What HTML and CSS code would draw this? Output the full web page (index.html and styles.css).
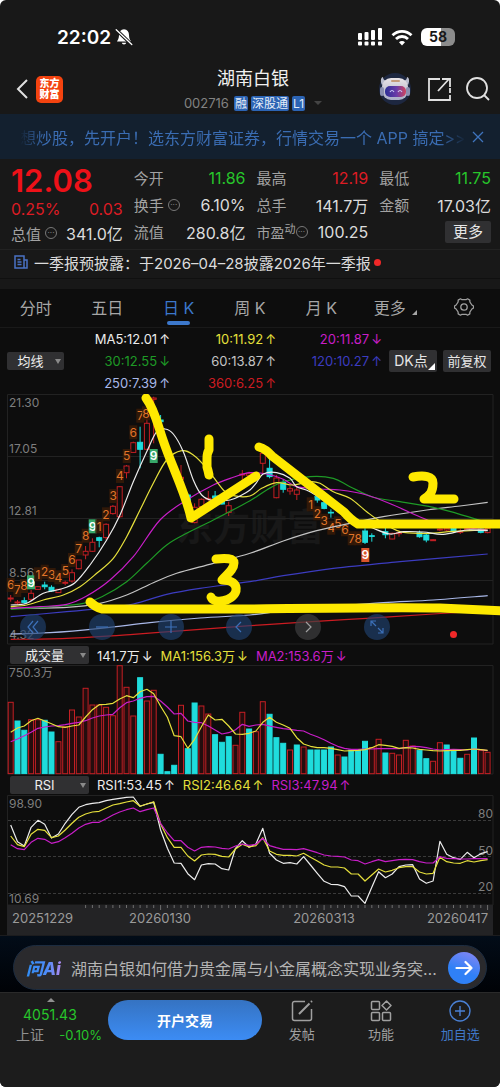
FILE: index.html
```html
<!DOCTYPE html>
<html lang="zh-CN">
<head>
    <meta charset="UTF-8">
    <meta name="viewport" content="width=device-width, initial-scale=1.0">
    <title>湖南白银 002716</title>
    <link rel="stylesheet" href="styles.css">
</head>
<body>
    <div class="app">
        <div class="status-bar">
            <div class="status-left">
                <span class="clock">22:02</span>
                <svg class="bell" viewBox="0 0 18 18" width="18" height="18">
                    <path d="M9 1.2c-3.2.4-5 2.6-5 5.8 0 3.5-1.2 4.700-2 6.500h14c-.8-1.800-2-3-2-6.500 0-3.200-1.800-5.400-5-5.800zM6.700 14.800a2.400 2.400 0 0 0 4.600 0z" fill="#fff"/>
                    <path d="M1.500 2l15 14.500" stroke="#181818" stroke-width="3.200"/>
                    <path d="M1.200 1.800l15.600 14.700" stroke="#fff" stroke-width="1.300" stroke-linecap="round"/>
                </svg>
            </div>
            <div class="status-right">
                <svg viewBox="0 0 26 18" width="26" height="18" fill="#fff">
                    <rect x="1" y="5" width="4" height="7" rx="1"/><rect x="7.500" y="4" width="4" height="8" rx="1"/>
                    <rect x="14" y="2" width="4" height="10" rx="1"/><rect x="21" y="0" width="4" height="12" rx="1"/>
                    <rect x="1" y="13.500" width="4" height="4" rx="1"/><rect x="7.500" y="13.500" width="4" height="4" rx="1"/>
                    <rect x="14" y="13.500" width="4" height="4" rx="1"/><rect x="21" y="13.500" width="4" height="4" rx="1"/>
                </svg>
                <svg viewBox="0 0 22 17" width="22" height="17" fill="none" stroke="#fff" stroke-width="2.800">
                    <path d="M1.500 6.200a13.500 13.500 0 0 1 19 0"/>
                    <path d="M5 10a8.500 8.500 0 0 1 12 0"/>
                    <path d="M11 16.500l-3-3.200a4.200 4.200 0 0 1 6 0z" fill="#fff" stroke="none"/>
                </svg>
                <span class="battery">58</span>
            </div>
        </div>

        <header class="header">
            <div class="header-left">
                <button class="icon-btn" aria-label="返回">
                    <svg viewBox="0 0 12 20" width="12" height="20" fill="none" stroke="#e0e0e0" stroke-width="2"><path d="M11 1L2 10l9 9"/></svg>
                </button>
                <a class="logo" href="#">东方<br>财富</a>
            </div>
            <div class="header-title">
                <h1>湖南白银</h1>
                <div class="stock-code">
                    <span class="code">002716</span>
                    <span class="tag">融</span><span class="tag">深股通</span><span class="tag">L1</span>
                    <i class="caret"></i>
                </div>
            </div>
            <div class="header-right">
                <button class="icon-btn" aria-label="智能助手">
                    <svg viewBox="0 0 34 34" width="34" height="34">
                        <defs>
                            <linearGradient id="visor"><stop offset="0" stop-color="#2c2f95"/><stop offset=".55" stop-color="#6a3ba8"/><stop offset="1" stop-color="#d0455e"/></linearGradient>
                            <linearGradient id="shell" x2="0" y2="1"><stop offset="0" stop-color="#e9e4e6"/><stop offset="1" stop-color="#a9adc6"/></linearGradient>
                        </defs>
                        <circle cx="17" cy="17" r="16" fill="#1d2740"/>
                        <path d="M4 13c-2-4-1-8 1-8 0 2 1 3 3 4zM30 13c2-4 1-8-1-8 0 2-1 3-3 4z" fill="#b9bccd"/>
                        <rect x="4" y="6" width="26" height="22" rx="9" fill="url(#shell)"/>
                        <rect x="2" y="15" width="4" height="9" rx="2" fill="#8a8fb0"/><rect x="28" y="15" width="4" height="9" rx="2" fill="#8a8fb0"/>
                        <path d="M14 9h7" stroke="#c49a7a" stroke-width="2" stroke-linecap="round"/>
                        <rect x="7" y="14" width="21" height="11" rx="5" fill="url(#visor)"/>
                        <path d="M12 20q2-3 4 0M20 20q2-3 4 0" fill="none" stroke="#c9c5f5" stroke-width="1.200"/>
                    </svg>
                </button>
                <button class="icon-btn" aria-label="分享">
                    <svg viewBox="0 0 24 24" width="24" height="24" fill="none" stroke="#e0e0e0" stroke-width="1.800"><path d="M13 2H2v21h21v-5M23 16v-5M11 14L22 2M15 2h8v8"/></svg>
                </button>
                <button class="icon-btn" aria-label="搜索">
                    <svg viewBox="0 0 24 24" width="24" height="24" fill="none" stroke="#e0e0e0" stroke-width="1.800"><circle cx="11" cy="11" r="10"/><path d="M18 18l5 5"/></svg>
                </button>
            </div>
        </header>

        <div class="banner">
            <a href="#">想炒股，先开户！选东方财富证券，行情交易一个 APP 搞定&gt;&gt;</a>
            <button class="icon-btn" aria-label="关闭">
                <svg viewBox="0 0 12 12" width="12" height="12" stroke="#3f74bd" stroke-width="1.300"><path d="M1 1l10 10M11 1L1 11"/></svg>
            </button>
        </div>

        <section class="quote">
            <div class="quote-col quote-main">
                <div class="price">12.08</div>
                <div class="cell change up"><span>0.25%</span><span>0.03</span></div>
                <div class="cell"><span class="label">总值<i class="more-dot">···</i></span><span>341.0亿</span></div>
            </div>
            <div class="quote-col">
                <div class="cell"><span class="label">今开</span><span class="down">11.86</span></div>
                <div class="cell"><span class="label">换手<i class="more-dot">···</i></span><span>6.10%</span></div>
                <div class="cell"><span class="label">流值</span><span>280.8亿</span></div>
            </div>
            <div class="quote-col">
                <div class="cell"><span class="label">最高</span><span class="up">12.19</span></div>
                <div class="cell"><span class="label">总手</span><span>141.7万</span></div>
                <div class="cell"><span class="label small">市盈<sup>动</sup><i class="more-dot">···</i></span><span>100.25</span></div>
            </div>
            <div class="quote-col">
                <div class="cell"><span class="label">最低</span><span class="down">11.75</span></div>
                <div class="cell"><span class="label">金额</span><span>17.03亿</span></div>
                <div class="cell end"><button class="grey-btn">更多</button></div>
            </div>
        </section>

        <a class="news" href="#">
            <svg viewBox="0 0 14 14" width="14" height="14" fill="none" stroke="#4a72c4" stroke-width="1.500"><path d="M10 13H1V1h9zM10 5h3v8h-4M3.500 4.500h3M3.500 7h4M3.500 9.500h4"/></svg>
            <span>一季报预披露：于2026–04–28披露2026年一季报</span>
            <i class="red-dot"></i>
        </a>

        <nav class="tabs">
            <button>分时</button>
            <button>五日</button>
            <button class="active">日 K</button>
            <button>周 K</button>
            <button>月 K</button>
            <button class="corner">更多</button>
            <button aria-label="设置">
                <svg viewBox="0 0 20 20" width="20" height="20" fill="none" stroke="#a0a0a0" stroke-width="1.300"><path d="M6.500 1.800l1.500.9h4l1.500-.9 2.300 1.300.1 1.900 2 3 1.600 1v2l-1.600 1-2 3-.1 1.900-2.300 1.300-1.500-.9H8l-1.500.9-2.300-1.300-.1-1.900-2-3-1.600-1V9l1.600-1 2-3 .1-1.900z" stroke-linejoin="round"/><circle cx="10" cy="10" r="3.200"/></svg>
            </button>
        </nav>

        <main class="charts">
            <div class="ma-row">
                <label class="picker picker-ma"><select aria-label="主图指标"><option>均线</option></select></label>
                <div class="ma-legend">
                    <span class="c-white">MA5:12.01<b>↑</b></span>
                    <span class="c-yellow">10:11.92<b>↑</b></span>
                    <span class="c-magenta">20:11.87<b>↓</b></span>
                    <span class="c-green">30:12.55<b>↓</b></span>
                    <span class="c-grey">60:13.87<b>↑</b></span>
                    <span class="c-blue">120:10.27<b>↑</b></span>
                    <span class="c-light">250:7.39<b>↑</b></span>
                    <span class="c-red">360:6.25<b>↑</b></span>
                </div>
                <button class="grey-btn corner">DK点</button>
                <button class="grey-btn">前复权</button>
            </div>

            <div class="price-chart">
                <svg id="priceChart" class="chart" viewBox="0 4 500 251"></svg>
                <div class="chart-tools">
                    <button aria-label="最早"><svg viewBox="0 0 16 16"><path d="M8 2L3 8l5 6M13 2L8 8l5 6"/></svg></button>
                    <button aria-label="缩小"><svg viewBox="0 0 16 16"><path d="M2 8h12"/></svg></button>
                    <button aria-label="放大"><svg viewBox="0 0 16 16"><path d="M2 8h12M8 2v12"/></svg></button>
                    <button aria-label="左移"><svg viewBox="0 0 16 16"><path d="M10 3L5 8l5 5"/></svg></button>
                    <button class="off" aria-label="右移"><svg viewBox="0 0 16 16"><path d="M6 3l5 5-5 5"/></svg></button>
                    <button aria-label="全屏"><svg viewBox="0 0 16 16"><path d="M2 7V2h5M2 2l5 5M14 9v5H9M14 14L9 9"/></svg></button>
                </div>
            </div>

            <div class="sub-head">
                <label class="picker"><select aria-label="成交量指标"><option>成交量</option></select></label>
                <span class="c-white">141.7万<b>↓</b></span>
                <span class="c-yellow">MA1:156.3万<b>↓</b></span>
                <span class="c-magenta">MA2:153.6万<b>↓</b></span>
            </div>
            <svg id="volumeChart" class="chart" viewBox="0 0 500 110"></svg>

            <div class="sub-head">
                <label class="picker"><select aria-label="副图指标"><option>RSI</option></select></label>
                <span class="c-white">RSI1:53.45<b>↑</b></span>
                <span class="c-yellow">RSI2:46.64<b>↑</b></span>
                <span class="c-magenta">RSI3:47.94<b>↑</b></span>
            </div>
            <svg id="rsiChart" class="chart" viewBox="0 0 500 140"></svg>
        </main>

        <div class="ai-wrap">
            <div class="ai-bar">
                <span class="ai-logo">问Ai</span>
                <a href="#">湖南白银如何借力贵金属与小金属概念实现业务突…</a>
                <button class="ai-go" aria-label="提问">
                    <svg viewBox="0 0 18 18" width="18" height="18" fill="none" stroke="#fff" stroke-width="2.200" stroke-linecap="round" stroke-linejoin="round"><path d="M1.500 9h15M10.500 3l6 6-6 6"/></svg>
                </button>
            </div>
        </div>

        <footer class="bottom-bar">
            <a class="index" href="#">
                <i class="tri-up"></i>
                <span class="down">4051.43</span>
                <span class="index-row"><span>上证</span><span class="down">-0.10%</span></span>
            </a>
            <button class="trade-btn">开户交易</button>
            <button class="nav-btn">
                <svg viewBox="0 0 22 22" width="22" height="22" fill="none" stroke="#a0a0a0" stroke-width="1.500"><path d="M14 1.500H3.500a2 2 0 0 0-2 2v15a2 2 0 0 0 2 2h15a2 2 0 0 0 2-2V9"/><path d="M8 14L18.500 3.500M20 2l1-1" stroke-width="2"/></svg>
                发帖
            </button>
            <button class="nav-btn">
                <svg viewBox="0 0 22 22" width="22" height="22" fill="none" stroke="#a0a0a0" stroke-width="1.500"><rect x="1.500" y="1.500" width="8" height="8" rx="1"/><rect x="1.500" y="12.500" width="8" height="8" rx="1"/><rect x="12.500" y="12.500" width="8" height="8" rx="1"/><path d="M16.500 1l4.500 4.500-4.500 4.500L12 5.500z" stroke-linejoin="round"/></svg>
                功能
            </button>
            <button class="nav-btn add">
                <svg viewBox="0 0 22 22" width="22" height="22" fill="none" stroke="#4a80d4" stroke-width="1.400"><circle cx="11" cy="11" r="10"/><path d="M6 11h10M11 6v10"/></svg>
                加自选
            </button>
        </footer>
    </div>

    <script src="script.js"></script>
</body>
</html>
```
FILE: styles.css
```css
* {
    box-sizing: border-box;
}
body {
    margin: 0;
    background: #fff;
    font-family: Inter, "Noto Sans CJK SC", sans-serif;
    font-size: 15px;
    color: #dcdcdc;
}
button, select {
    font: inherit;
    color: inherit;
    background: none;
    border: none;
    padding: 0;
    margin: 0;
    cursor: pointer;
}
a {
    color: inherit;
    text-decoration: none;
}
i, b {
    font-style: normal;
    font-weight: normal;
}
svg {
    display: block;
}
.app {
    background: #181818;
    border-radius: 6px;
    overflow: hidden;
}
.up {
    color: #dc1c24;
}
.down {
    color: #27c52b;
}
.icon-btn {
    display: flex;
}

/* status bar */
.status-bar {
    display: flex;
    justify-content: space-between;
    align-items: center;
    height: 64px;
    padding: 10px 45px 0 57px;
}
.status-left, .status-right {
    display: flex;
    align-items: center;
    gap: 4px;
    color: #fff;
}
.status-right {
    gap: 8px;
}
.clock {
    font-size: 19px;
    font-weight: 600;
}
.battery {
    width: 34px;
    height: 18px;
    border-radius: 6px;
    background: linear-gradient(90deg, #fff 58%, #8c8c8c 58%);
    color: #181818;
    font-size: 14px;
    font-weight: 700;
    line-height: 18px;
    text-align: center;
}

/* header */
.header {
    display: grid;
    grid-template-columns: 1fr auto 1fr;
    align-items: center;
    height: 50px;
    padding: 0 10px 0 16px;
}
.header-left, .header-right {
    display: flex;
    align-items: center;
    gap: 8px;
}
.header-right {
    justify-content: flex-end;
    gap: 15px;
}
.logo {
    width: 27px;
    height: 27px;
    padding-top: 2px;
    border-radius: 5px;
    background: #f4430f;
    color: #fff;
    font-size: 10px;
    font-weight: 900;
    line-height: 11px;
    text-align: center;
}
.header-title {
    text-align: center;
}
h1 {
    margin: 0;
    font-size: 18px;
    font-weight: 400;
    line-height: 28px;
    color: #f0f0f0;
}
.stock-code {
    display: flex;
    align-items: center;
    gap: 3px;
    height: 20px;
    font-size: 13px;
    color: #828282;
}
.stock-code .code {
    margin-right: 2px;
}
.tag {
    padding: 0 1px;
    border-radius: 2px;
    background: #2c64b4;
    color: #e4edf8;
    font-size: 12px;
    line-height: 15px;
}
.caret {
    margin-left: 6px;
    border: 4px solid transparent;
    border-top-color: #444;
    border-bottom: 0;
}

/* open-account banner */
.banner {
    display: flex;
    align-items: center;
    justify-content: space-between;
    height: 45px;
    padding: 0 16px 0 20px;
    background: #13202f;
    color: #3a6cb2;
}
.banner a {
    font-size: 16px;
    white-space: nowrap;
    overflow: hidden;
    -webkit-mask-image: linear-gradient(90deg, transparent, #000 24px, #000 94%, transparent);
    mask-image: linear-gradient(90deg, transparent, #000 24px, #000 94%, transparent);
}

/* quote */
.quote {
    display: grid;
    grid-template-columns: repeat(4, 1fr);
    gap: 11px;
    padding: 5px 9px 4px 11px;
    border-bottom: 1px solid #222;
}
.cell {
    display: flex;
    justify-content: space-between;
    align-items: center;
    height: 27px;
    font-size: 16px;
    white-space: nowrap;
}
.cell.end {
    justify-content: flex-end;
}
.quote-main .cell {
    height: 24px;
}
.price {
    color: #ee1118;
    font-size: 31px;
    font-weight: 600;
    line-height: 33px;
}
.label {
    display: flex;
    align-items: center;
    color: #a2a2a2;
    font-size: 15px;
}
.label.small {
    font-size: 14px;
}
.label sup {
    align-self: flex-start;
    font-size: 11px;
    line-height: 14px;
}
.more-dot {
    width: 12px;
    height: 12px;
    margin-left: 4px;
    border: 1px solid #777;
    border-radius: 50%;
    color: #888;
    font-size: 8px;
    line-height: 9px;
    text-align: center;
}
.small .more-dot {
    margin-left: 0;
}
.grey-btn {
    height: 22px;
    padding: 0 8px;
    border-radius: 2px;
    background: #303032;
    color: #e6e6e6;
    font-size: 15px;
    line-height: 22px;
}

/* announcement */
.news {
    display: flex;
    align-items: center;
    gap: 6px;
    height: 29px;
    padding: 0 14px 4px;
    border-bottom: 1px solid #101010;
    white-space: nowrap;
}
.red-dot {
    width: 7px;
    height: 7px;
    margin-left: -3px;
    border-radius: 50%;
    background: #f02828;
}

/* period tabs */
.tabs {
    display: grid;
    grid-template-columns: repeat(7, 1fr);
    height: 39px;
    margin-top: 10px;
    background: #0d0d0d;
    border-bottom: 1px solid #191919;
    color: #a6a6a6;
    font-size: 16px;
}
.tabs button {
    display: flex;
    align-items: center;
    justify-content: center;
    position: relative;
    padding-bottom: 2px;
}
.tabs .active {
    color: #3c78cc;
}
.tabs .active::after {
    content: "";
    position: absolute;
    bottom: 2px;
    width: 23px;
    height: 4px;
    border-radius: 2px;
    background: #3c78cc;
}
.corner {
    position: relative;
}
.corner::after {
    content: "";
    position: absolute;
    right: 2px;
    bottom: 2px;
    border-left: 7px solid transparent;
    border-bottom: 7px solid #fff;
}
.tabs .corner {
    padding-right: 6px;
}
.tabs .corner::after {
    right: 12px;
    bottom: 12px;
    border-left-width: 5px;
    border-bottom: 5px solid #a6a6a6;
}

/* charts */
.charts {
    background: #0d0d0d;
}
.chart {
    width: 100%;
    height: auto;
}
.ma-row {
    display: flex;
    align-items: center;
    height: 66px;
    padding: 0 9px 0 7px;
    font-size: 14px;
    white-space: nowrap;
}
.ma-row .grey-btn {
    width: 48px;
    padding: 0;
    font-size: 13px;
}
.ma-row .grey-btn.corner {
    margin: 0 6px 0 7px;
    padding-right: 4px;
    font-size: 14px;
}
.ma-legend {
    flex: 1;
    display: grid;
    grid-template-columns: repeat(3, 1fr);
    text-align: right;
    line-height: 22px;
    font-size: 13px;
}
b {
    margin-left: 2px;
}
.picker {
    position: relative;
    width: 79px;
    height: 18px;
    border-radius: 2px;
    background: #303032;
    color: #eee;
}
.picker::after {
    content: "";
    position: absolute;
    right: 3px;
    top: 7px;
    border: 3px solid transparent;
    border-top: 5px solid #8a8a8a;
    border-bottom: 0;
    pointer-events: none;
}
.picker select {
    display: block;
    width: 100%;
    height: 18px;
    padding-right: 10px;
    appearance: none;
    font-size: 13px;
    line-height: 18px;
    text-align: center;
    text-align-last: center;
}
.picker-ma {
    width: 57px;
}
.sub-head {
    display: flex;
    align-items: center;
    gap: 8px;
    height: 20px;
    padding-left: 10px;
    font-size: 13px;
    white-space: nowrap;
}
.c-white { color: #ececec; }
.c-yellow { color: #e6e03c; }
.c-magenta { color: #c81ec8; }
.c-green { color: #1e9a26; }
.c-grey { color: #c4c4c4; }
.c-blue { color: #3c3cc0; }
.c-light { color: #a9b8e8; }
.c-red { color: #cc1c22; }

.price-chart {
    position: relative;
}
.chart-tools {
    position: absolute;
    left: 4%;
    bottom: 5px;
    width: 74%;
    display: flex;
    justify-content: space-between;
}
.chart-tools button {
    display: flex;
    align-items: center;
    justify-content: center;
    width: 26px;
    height: 26px;
    border-radius: 50%;
    background: rgba(32, 66, 112, 0.65);
}
.chart-tools .off {
    background: rgba(62, 62, 64, 0.7);
}
.chart-tools svg {
    width: 16px;
    height: 16px;
    fill: none;
    stroke: #3c70b8;
    stroke-width: 1.2;
}
.chart-tools .off svg {
    stroke: #a0a0a0;
}

/* svg parts */
.grid {
    stroke: #222;
    stroke-width: 1;
    fill: none;
}
.grid.dashed {
    stroke: #3a3a3a;
    stroke-dasharray: 3 2;
}
.line {
    fill: none;
    stroke: currentColor;
    stroke-width: 1.2;
    stroke-linejoin: round;
}
.rise {
    fill: #0d0d0d;
    stroke: #c41f24;
}
.fall {
    fill: #1fdcdc;
    stroke: #1fdcdc;
}
.vol.rise {
    fill: #240d0e;
}
.axis-text {
    fill: #7e7e7e;
    font-size: 12px;
}
.date-text {
    fill: #9a9a9a;
    font-size: 13px;
}
.count-box {
    fill: #3a1b08;
    opacity: 0.8;
}
.count-box.buy {
    fill: #37a869;
    opacity: 1;
}
.count-box.sell {
    fill: #d9542b;
    opacity: 1;
}
.count-text {
    fill: #e07428;
    font-size: 12px;
    text-anchor: middle;
}
.count-text.buy, .count-text.sell {
    fill: #fff;
    font-weight: 600;
}
.watermark {
    fill: #181818;
    font-size: 37px;
    font-weight: 700;
    text-anchor: middle;
}
.marker {
    fill: none;
    stroke: #fee900;
    stroke-width: 9;
    stroke-linecap: round;
    stroke-linejoin: round;
}
.axis-bg {
    fill: #232325;
}
.tick {
    stroke: #6e6e6e;
    stroke-width: 1;
}

/* ai question bar */
.ai-wrap {
    padding: 9px 13px 2px;
    border-top: 1px solid #1c1c1e;
    background: linear-gradient(#020c18, #000206);
}
.ai-bar {
    display: flex;
    align-items: center;
    gap: 9px;
    height: 45px;
    padding: 0 6px 0 12px;
    border: 1px solid #1c2c40;
    border-radius: 23px;
    background: #2a2a2d;
}
.ai-bar a {
    flex: 1;
    color: #b4b4b4;
    font-size: 16px;
    white-space: nowrap;
    overflow: hidden;
}
.ai-logo {
    padding-right: 1px;
    background: linear-gradient(90deg, #2f8df5, #4f8cf8 60%, #b58af0);
    -webkit-background-clip: text;
    background-clip: text;
    color: transparent;
    font-size: 17px;
    font-style: italic;
    font-weight: 800;
}
.ai-go {
    display: flex;
    align-items: center;
    justify-content: center;
    width: 32px;
    height: 32px;
    border-radius: 50%;
    background: linear-gradient(200deg, #8a86f4, #2f80f6 60%);
}

/* bottom bar */
.bottom-bar {
    display: flex;
    height: 95px;
    border-top: 1px solid #2a2a2a;
    background: #1c1c1c;
}
.index {
    display: flex;
    flex-direction: column;
    align-items: center;
    width: 108px;
    padding: 5px 6px 0 16px;
    font-size: 14px;
    line-height: 20px;
}
.index > .down {
    align-self: flex-start;
    margin-left: 7px;
}
.tri-up {
    align-self: flex-start;
    margin: 0 0 3px 31px;
    border: 4px solid transparent;
    border-bottom-color: #909090;
    border-top: 0;
}
.index-row {
    display: flex;
    align-self: stretch;
    justify-content: space-between;
    color: #909090;
}
.index-row .down {
    font-size: 13px;
}
.trade-btn {
    width: 154px;
    height: 40px;
    margin-top: 7px;
    border-radius: 20px;
    background: linear-gradient(#3573c2, #3c8cf4);
    color: #fff;
    font-size: 14px;
    font-weight: 600;
}
.nav-btn {
    flex: 1;
    display: flex;
    flex-direction: column;
    align-items: center;
    align-self: flex-start;
    gap: 3px;
    padding-top: 7px;
    color: #a0a0a0;
    font-size: 13px;
    line-height: 19px;
}
.nav-btn.add {
    color: #4078c8;
}
```
FILE: script.js
```js
// Chart data is kept on a 1500-unit wide grid, the view boxes are 500 wide
const UNIT = 3;
const STEP = 20.44;
const FIRST = 32;
const px = (v) => +(v / UNIT).toFixed(1);
const barX = (i) => FIRST + STEP * i;

const rect = (x, y, w, h, cls) => `<rect x="${x}" y="${y}" width="${w}" height="${h}" class="${cls}"/>`;
const line = (x1, y1, x2, y2, cls) => `<path d="M${x1} ${y1}L${x2} ${y2}" class="${cls}"/>`;
const text = (x, y, s, cls, extra = '') => `<text x="${x}" y="${y}" class="${cls}" ${extra}>${s}</text>`;

// smooth curve through sparse points
const curve = (pts, cls) => {
    let d = `M${px(pts[0][0])} ${px(pts[0][1])}`;
    for (let i = 0; i < pts.length - 1; i++) {
        const a = pts[i - 1] || pts[i], b = pts[i], c = pts[i + 1], e = pts[i + 2] || c;
        d += `C${px(b[0] + (c[0] - a[0]) / 6)} ${px(b[1] + (c[1] - a[1]) / 6)} `
            + `${px(c[0] - (e[0] - b[0]) / 6)} ${px(c[1] - (e[1] - b[1]) / 6)} ${px(c[0])} ${px(c[1])}`;
    }
    return `<path d="${d}" class="line ${cls}"/>`;
};

const series = (values, cls) => {
    const pts = values.map((v, i) => `${px(barX(i))},${px(v - 60)}`).join(' ');
    return `<polyline points="${pts}" class="line ${cls}"/>`;
};

// ---- price ----
// [index, high, low, body top, body bottom, type]
const candles = [
    [0, 615, 635, 624, 627, 'r'], [1, 630, 645, 636, 639, 'r'], [2, 622, 642, 632, 637, 'c'],
    [3, 600, 632, 610, 628, 'r'], [4, 588, 600, 590, 598, 'r'], [5, 575, 598, 585, 590, 'c'],
    [6, 586, 606, 592, 603, 'c'], [7, 598, 608, 598, 608, 'r'], [8, 572, 586, 577, 580, 'r'],
    [9, 538, 578, 548, 573, 'r'], [10, 510, 538, 510, 536, 'r'], [11, 468, 508, 484, 495, 'r'],
    [12, 445, 486, 457, 484, 'r'], [13, 440, 472, 443, 451, 'c'], [14, 400, 450, 403, 443, 'r'],
    [15, 345, 374, 349, 371, 'r'], [16, 288, 384, 290, 380, 'r'], [17, 225, 265, 228, 248, 'r'],
    [18, 155, 188, 158, 187, 'r'], [19, 110, 235, 157, 178, 'c'], [20, 80, 180, 100, 178, 'r'],
    [21, 20, 160, 24, 28, 'r'], [22, 75, 120, 90, 95, 'c'], [25, 225, 272, 262, 268, 'r'],
    [26, 310, 345, 315, 340, 'c'], [27, 340, 400, 352, 398, 'r'], [28, 325, 355, 328, 350, 'r'],
    [29, 303, 332, 325, 328, 'r'], [30, 303, 330, 318, 324, 'c'], [31, 322, 344, 330, 342, 'c'],
    [32, 335, 378, 347, 367, 'r'], [34, 240, 270, 252, 255, 'r'], [35, 245, 262, 250, 256, 'r'],
    [37, 180, 250, 190, 220, 'r'], [38, 195, 265, 235, 260, 'c'], [39, 255, 325, 264, 323, 'r'],
    [40, 268, 308, 277, 298, 'c'], [41, 288, 314, 296, 303, 'r'], [42, 290, 330, 300, 313, 'r'],
    [45, 315, 338, 320, 330, 'c'], [46, 330, 358, 338, 355, 'c'], [47, 358, 383, 367, 369, 'c'],
    [52, 415, 462, 423, 457, 'c'], [53, 430, 455, 437, 439, 'c'], [55, 412, 445, 425, 434, 'c'],
    [56, 428, 448, 430, 447, 'r'], [57, 422, 440, 428, 431, 'r'], [60, 422, 443, 428, 440, 'c'],
    [61, 430, 457, 435, 450, 'c'], [62, 447, 453, 449, 452, 'r'], [63, 415, 424, 417, 420, 'r'],
    [64, 413, 423, 415, 420, 'r'], [65, 413, 427, 415, 425, 'c'], [66, 416, 432, 425, 427, 'r'],
    [67, 414, 422, 416, 420, 'r'], [69, 415, 430, 417, 427, 'c'], [70, 413, 430, 415, 428, 'r']
];

const averages = {
    'c-red': [[32, 748], [200, 745], [400, 733], [600, 718], [750, 707], [900, 697], [1100, 685], [1300, 672], [1463, 664]],
    'c-light': [[32, 732], [150, 728], [300, 715], [450, 698], [600, 684], [750, 675], [850, 662], [1000, 650], [1150, 638], [1300, 630], [1463, 617]],
    'c-blue': [[32, 680], [200, 665], [300, 655], [400, 642], [500, 613], [600, 595], [750, 575], [850, 557], [1000, 535], [1200, 515], [1463, 492]],
    'c-grey': [[32, 655], [200, 652], [300, 640], [380, 615], [460, 578], [530, 550], [640, 520], [750, 490], [850, 453], [950, 422], [1050, 400], [1150, 380], [1280, 360], [1380, 348], [1463, 337]],
    'c-green': [[32, 658], [150, 650], [250, 640], [310, 618], [380, 575], [440, 520], [500, 465], [560, 430], [640, 390], [750, 332], [800, 300], [850, 275], [930, 260], [1000, 265], [1050, 290], [1120, 322], [1200, 335], [1300, 352], [1370, 370], [1463, 398]],
    'c-magenta': [[32, 655], [120, 650], [200, 643], [260, 618], [330, 570], [400, 500], [480, 390], [560, 330], [640, 285], [700, 262], [750, 248], [800, 252], [850, 268], [890, 290], [960, 297], [1020, 300], [1100, 315], [1180, 345], [1270, 385], [1330, 405], [1463, 420]],
    'c-yellow': [[32, 650], [80, 645], [130, 630], [190, 615], [240, 590], [290, 550], [340, 505], [380, 440], [420, 360], [460, 280], [500, 210], [545, 182], [580, 195], [620, 235], [670, 300], [700, 317], [750, 318], [785, 295], [830, 278], [880, 285], [930, 275], [960, 280], [1000, 305], [1050, 325], [1100, 365], [1135, 390], [1200, 425], [1280, 430], [1360, 424], [1463, 420]],
    'c-white': [[32, 645], [80, 640], [130, 610], [180, 598], [225, 578], [270, 525], [320, 450], [360, 375], [400, 275], [440, 185], [470, 125], [495, 117], [520, 132], [550, 185], [580, 270], [605, 315], [640, 332], [690, 330], [720, 318], [750, 300], [768, 280], [790, 252], [830, 248], [870, 265], [890, 290], [930, 305], [1000, 350], [1060, 390], [1120, 415], [1170, 432], [1210, 425], [1270, 426], [1330, 433], [1400, 420], [1463, 422]]
};

// nine-turn counts: [x, y, number, type]
const counts = [
    [32, 585, 6], [52, 600, 7], [72, 588, 8], [93, 577, 9, 'buy'], [114, 553, 1], [134, 545, 2], [155, 555, 3],
    [175, 562, 4], [196, 543, 5], [216, 510, 6], [236, 475, 7], [257, 437, 8], [278, 409, 9, 'buy'], [298, 409, 1],
    [318, 373, 2], [340, 318, 3], [360, 258, 4], [380, 198, 5], [400, 127, 6], [421, 77, 7], [438, 70, 8],
    [461, 198, 9, 'buy'], [932, 343, 1], [952, 370, 2], [973, 392, 3], [994, 413, 4], [1014, 400, 5], [1035, 418, 6],
    [1055, 445, 7], [1075, 445, 8], [1096, 495, 9, 'sell']
];

const drawPrice = () => {
    let s = text(250, 151, '东方财富', 'watermark');
    s += '<path d="M7.500 4.500H493V254H7.500zM7.500 66.500H493M7.500 128.500H493M7.500 190.500H493" class="grid"/>';
    s += '<path d="M434 136.500h59" stroke="#333" stroke-width="3"/>';
    [[17, '21.30'], [63, '17.05'], [125, '12.81'], [187, '8.56'], [249, '4.32']].forEach(([y, t]) => {
        s += text(9, y, t, 'axis-text');
    });
    candles.forEach(([i, hi, lo, top, bottom, type]) => {
        const x = px(barX(i)), cls = type === 'r' ? 'rise' : 'fall';
        s += line(x, px(hi), x, px(lo), cls);
        s += rect((x - 2.5).toFixed(1), px(top), 5, px(bottom - top), cls);
    });
    counts.forEach(([x, y, n, type = '']) => {
        s += rect(px(x - 12), px(y - 21), 8, 14, 'count-box ' + type);
        s += text(px(x), px(y + 13), n, 'count-text ' + type);
    });
    for (const cls in averages) {
        s += curve(averages[cls], cls);
    }
    s += '<circle cx="453.500" cy="244.500" r="3.500" fill="#f02828"/>';
    // hand-drawn strokes
    s += '<path class="marker" d="M146 8C155 20 158 36 163 50C172 77 186 104 191 128L222 108L256 86"/>';
    s += '<path class="marker" d="M259 57Q266 59 272 66L344 122Q351 130 358 134H505"/>';
    s += '<path class="marker" d="M90 212Q95 217 102 219H250C330 218 400 217 440 218L505 221"/>';
    s += '<path class="marker" d="M209 49V60Q207 63 207 68V77Q208 80 209 85"/>';
    s += '<path class="marker" d="M413 87C424 85 433 86 433 93C433 102 430 105 424 109H454"/>';
    s += '<path class="marker" d="M216 169C225 168 234 168 234 173C234 180 226 185 222 190C232 190 237 194 236 201C233 211 214 215 211 207"/>';
    document.getElementById('priceChart').innerHTML = s;
};

// ---- volume ----
const volumes = [214, 158, 130, 162, 162, 160, 125, 96, 141, 191, 170, 256, 206, 206, 199, 174, 324, 259, 173, 288, 218, 250, 58, 6, 25, 205, 75, 212, 203, 179, 117, 94, 111, 85, 184, 134, 126, 216, 178, 108, 91, 71, 86, 80, 71, 71, 71, 80, 56, 50, 71, 71, 97, 78, 103, 62, 61, 56, 100, 83, 70, 45, 37, 93, 86, 70, 46, 58, 107, 70, 64];
const volumeTypes = 'rccrrccrrrrrrrrrrrrcrrcccrccrrcccrrcrrcccrcrccccrccccrrcrrrrccrrcccrcrr';
const volumeMa1 = [262, 249, 243, 227, 220, 228, 236, 245, 247, 243, 240, 216, 194, 179, 178, 175, 162, 152, 158, 140, 133, 146, 184, 217, 272, 275, 310, 283, 245, 210, 225, 223, 243, 267, 268, 265, 258, 232, 217, 232, 240, 250, 278, 297, 304, 308, 308, 310, 314, 318, 317, 316, 314, 308, 299, 301, 304, 310, 308, 309, 313, 315, 317, 318, 317, 316, 316, 314, 312, 314, 316];
const volumeMa2 = [290, 282, 272, 262, 250, 246, 243, 242, 239, 235, 232, 227, 219, 213, 210, 208, 188, 173, 168, 160, 155, 154, 168, 186, 207, 205, 228, 232, 233, 243, 255, 267, 263, 254, 238, 244, 240, 238, 243, 247, 251, 253, 256, 258, 268, 275, 284, 295, 304, 310, 313, 313, 312, 312, 311, 311, 311, 311, 308, 304, 305, 308, 312, 315, 314, 313, 314, 315, 312, 314, 317];

const drawVolume = () => {
    let s = '<path d="M7.500 .5H493V109H7.500z" class="grid"/>';
    volumes.forEach((v, i) => {
        const cls = volumeTypes[i] === 'r' ? 'vol rise' : 'vol fall';
        s += rect((px(barX(i)) - 2.5).toFixed(1), px(326 - v), 5, px(v), cls);
    });
    s += text(9, 12, '750.3万', 'axis-text');
    s += series(volumeMa2, 'c-magenta') + series(volumeMa1, 'c-yellow');
    document.getElementById('volumeChart').innerHTML = s;
};

// ---- rsi ----
const rsi1 = [150, 200, 213, 157, 136, 148, 189, 177, 145, 118, 97, 89, 85, 83, 77, 73, 70, 67, 66, 94, 87, 82, 165, 220, 264, 265, 296, 314, 270, 266, 267, 281, 285, 220, 197, 217, 207, 160, 235, 255, 265, 263, 267, 245, 270, 295, 319, 328, 329, 335, 363, 363, 385, 337, 290, 308, 297, 275, 270, 269, 312, 325, 318, 199, 238, 248, 253, 232, 248, 236, 230];
const rsi2 = [183, 209, 215, 178, 163, 166, 188, 183, 165, 145, 127, 117, 111, 109, 99, 90, 86, 81, 77, 94, 87, 80, 147, 188, 217, 217, 243, 258, 240, 237, 238, 244, 246, 222, 208, 216, 212, 188, 228, 238, 241, 241, 243, 235, 247, 258, 270, 276, 276, 279, 297, 297, 318, 300, 282, 291, 286, 278, 275, 275, 291, 297, 295, 247, 260, 264, 265, 257, 261, 257, 254];
const rsi3 = [209, 221, 224, 202, 190, 193, 205, 200, 188, 175, 159, 148, 142, 142, 131, 120, 111, 104, 99, 110, 104, 99, 145, 174, 197, 197, 217, 228, 217, 215, 216, 220, 222, 213, 207, 211, 208, 190, 212, 218, 223, 223, 224, 221, 227, 233, 240, 243, 244, 246, 255, 257, 267, 260, 254, 260, 257, 254, 253, 254, 260, 264, 264, 245, 250, 251, 252, 252, 251, 251, 251];

const drawRsi = () => {
    let s = '<path d="M7.500 .5H493V110H7.500z" class="grid"/>';
    s += '<path d="M8 25.500H493M8 61.500H493M8 98.500H493" class="grid dashed"/>';
    s += rect(7, 110, 486, 30, 'axis-bg');
    for (let i = 11; i <= 70; i++) {
        const x = px(barX(i));
        s += line(x, 110, x, [22, 46, 70].includes(i) ? 115 : 113, 'tick');
    }
    s += text(9, 13, '98.90', 'axis-text') + text(9, 108, '10.69', 'axis-text');
    [[23, 80], [60, 50], [96, 20]].forEach(([y, t]) => {
        s += text(493, y, t, 'axis-text', 'text-anchor="end"');
    });
    s += text(12, 128, '20251229', 'date-text');
    s += text(160, 128, '20260130', 'date-text', 'text-anchor="middle"');
    s += text(324, 128, '20260313', 'date-text', 'text-anchor="middle"');
    s += text(488, 128, '20260417', 'date-text', 'text-anchor="end"');
    s += series(rsi1, 'c-white') + series(rsi2, 'c-yellow') + series(rsi3, 'c-magenta');
    document.getElementById('rsiChart').innerHTML = s;
};

drawPrice();
drawVolume();
drawRsi();
```
